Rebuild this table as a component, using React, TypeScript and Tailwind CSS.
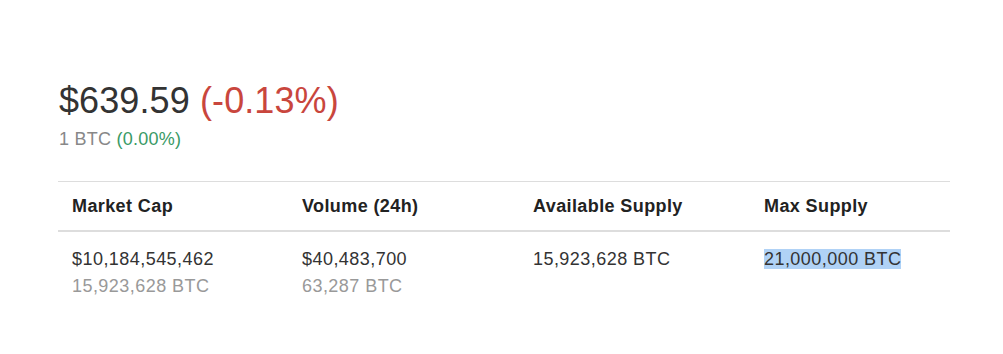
import React from "react";

const cols = [
  { head: "Market Cap", main: "$10,184,545,462", sub: "15,923,628 BTC" },
  { head: "Volume (24h)", main: "$40,483,700", sub: "63,287 BTC" },
  { head: "Available Supply", main: "15,923,628 BTC", sub: "" },
  { head: "Max Supply", main: "21,000,000 BTC", sub: "", hl: true },
];

export default function App() {
  return (
    <div
      className="w-[1003px] h-[354px] bg-white text-[#333]"
      style={{ fontFamily: '"Liberation Sans", Arial, sans-serif' }}
    >
      <div className="pl-[58px] pt-[81px] w-[950px]">
        <div className="text-[36px] leading-[40px] ml-[1px] tracking-[0.1px]">
          <span className="text-[#333]">$639.59</span>{" "}
          <span className="text-[#c9463d]">(-0.13%)</span>
        </div>
        <div className="mt-[6px] text-[18px] leading-[24px] text-[#888] ml-[1px] tracking-[0.25px]">
          1 BTC <span className="text-[#3a9a66]">(0.00%)</span>
        </div>
        <div className="mt-[30px] border-t border-[#ddd] w-[892px]">
          <div className="grid grid-cols-[230px_231px_231px_1fr] border-b-2 border-[#ddd]">
            {cols.map((c) => (
              <div
                key={c.head}
                className="pl-[14px] py-[12px] text-[18px] leading-[24px] font-bold text-[#222] tracking-[0.4px]"
              >
                {c.head}
              </div>
            ))}
          </div>
          <div className="grid grid-cols-[230px_231px_231px_1fr]">
            {cols.map((c) => (
              <div
                key={c.head}
                className="pl-[14px] pt-[14px] pb-[12px] text-[18px] leading-[27px] tracking-[0.45px]"
              >
                <div className="text-[#333]">
                  {c.hl ? <span className="bg-[#b0d2f6]">{c.main}</span> : c.main}
                </div>
                {c.sub && <div className="text-[#999]">{c.sub}</div>}
              </div>
            ))}
          </div>
        </div>
      </div>
    </div>
  );
}
